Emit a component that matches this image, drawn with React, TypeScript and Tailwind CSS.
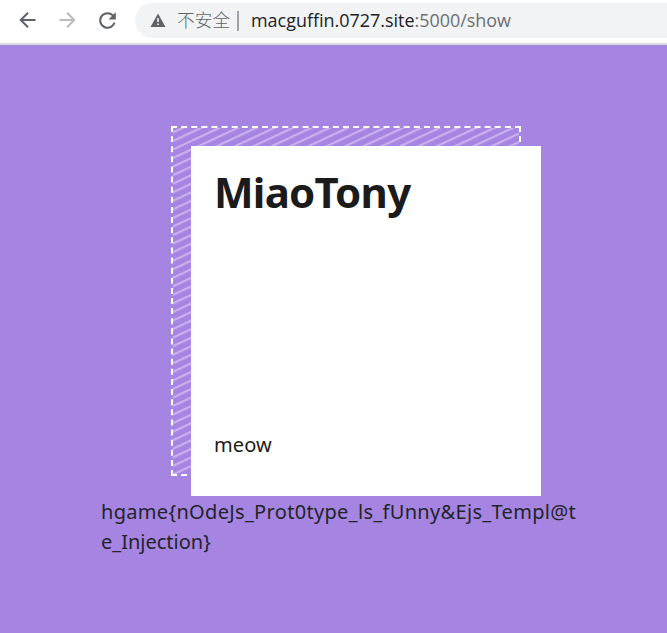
import React from "react";

function Toolbar() {
  return (
    <header className="flex h-[45px] items-start border-b-2 border-[#d8dbdf] bg-white">
      <div className="flex h-[43px] items-center pl-[16px]">
        <svg width="24" height="24" viewBox="0 0 24 24" fill="none" stroke="#5f6368" strokeWidth="2" className="mb-[3px]">
          <path d="M19.5 12H5M12 4.7L4.7 12l7.3 7.3" />
        </svg>
        <svg width="24" height="24" viewBox="0 0 24 24" fill="none" stroke="#babcbe" strokeWidth="2" className="mb-[3px] ml-[15px]">
          <path d="M4.5 12H19M12 4.7l7.3 7.3-7.3 7.3" />
        </svg>
        <svg width="25" height="25" viewBox="0 0 24 24" fill="#5f6368" className="mb-[3px] ml-[16px]">
          <path d="M17.65 6.35A7.96 7.96 0 0 0 12 4a8 8 0 1 0 7.73 10h-2.08A6 6 0 1 1 12 6c1.66 0 3.14.69 4.22 1.78L13 11h7V4z" />
        </svg>
      </div>
      <div className="mt-[3px] ml-[15px] flex h-[35px] flex-1 items-center overflow-hidden rounded-l-full bg-[#f1f3f4] pl-[15px] whitespace-nowrap">
        <svg width="16" height="15" viewBox="0 0 16 15" className="shrink-0">
          <path d="M8 .5L15.5 14H.5z" fill="#5f6368" />
          <path d="M7.2 5h1.6v4H7.2zM7.2 10.4h1.6V12H7.2z" fill="#f1f3f4" />
        </svg>
        <span className="ml-[11px] w-[53px] font-['Noto_Sans_CJK_SC',sans-serif] text-[17.7px] leading-none font-light text-[#5f6368]"><span className="relative -top-px">不安全</span></span>
        <span className="ml-[7px] h-5 w-[2px] bg-[#a0a2a5]" />
        <svg width="262" height="30" className="ml-[12px] font-['Open_Sans','Noto_Sans',sans-serif] text-[18.5px]">
          <text x="0" y="21" textLength="260" lengthAdjust="spacingAndGlyphs" fill="#202124">
            macguffin.0727.site<tspan fill="#6b6f73">:5000/show</tspan>
          </text>
        </svg>
      </div>
    </header>
  );
}

function Card() {
  return (
    <article className="ml-[171px] size-[350px] border-2 border-dashed border-white">
      <svg width="346" height="346" className="block">
        <defs>
          <pattern id="stripes" width="100" height="7.75" patternUnits="userSpaceOnUse" patternTransform="rotate(-25)">
            <path d="M0 4H100" stroke="#c8b1ed" strokeWidth="2.3" />
          </pattern>
        </defs>
        <rect width="346" height="346" fill="url(#stripes)" />
      </svg>
      <div className="relative -top-[328px] left-[18px] flex size-[350px] flex-col justify-between bg-white px-[23px] py-[22px] font-['Noto_Sans',sans-serif] text-[#1b1b1b]">
        <h1 className="text-[42px] leading-[48px] font-bold tracking-[-0.75px]">MiaoTony</h1>
        <p className="mb-[14px] text-[20px] leading-[30px] tracking-[0.1px]">meow</p>
      </div>
    </article>
  );
}

export default function App() {
  return (
    <div className="h-[633px] w-[667px] overflow-hidden bg-[#a684e2]">
      <Toolbar />
      <main className="pt-[81px]">
        <Card />
        <p className="mt-[21px] ml-[101px] w-[480px] font-['Noto_Sans',sans-serif] text-[20px] leading-[30px] text-[#212529]">
          <span className="tracking-[0.32px]">hgame{"{"}nOdeJs_Prot0type_ls_fUnny&amp;Ejs_Templ@t</span>
          <br />
          e_Injection{"}"}
        </p>
      </main>
    </div>
  );
}
